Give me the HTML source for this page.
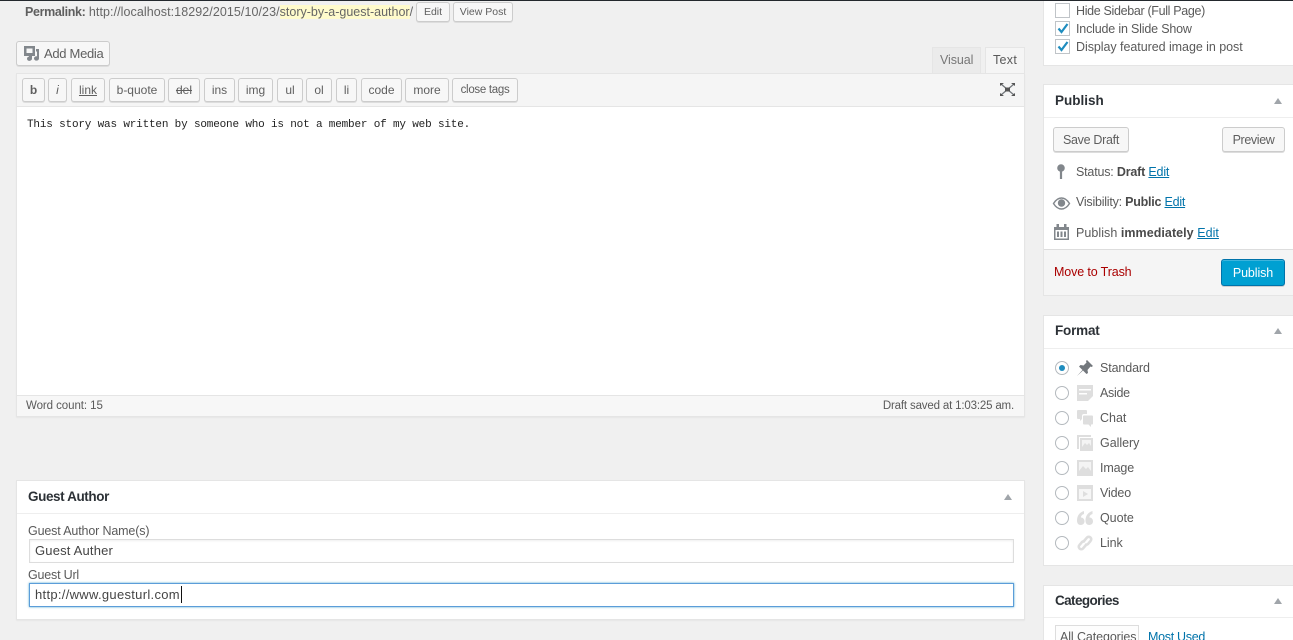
<!DOCTYPE html>
<html><head><meta charset="utf-8"><title>Edit Post</title>
<style>
html,body{margin:0;padding:0;width:1293px;height:640px;overflow:hidden;background:#f0f0f0}
body{position:relative;font-family:"Liberation Sans",sans-serif;font-size:13px;color:#444}
.a,.t,.b,.p{position:absolute;box-sizing:border-box}
.t{white-space:nowrap;line-height:18px;font-size:12.5px;color:#5a5a5a}
.b{background:#f7f7f7;border:1px solid #ccc;border-radius:3px;box-shadow:0 1px 0 #ddd;color:#5f5f5f;text-align:center;white-space:nowrap;font-size:12px;line-height:22px;height:24px}
.p{background:#fff;border:1px solid #e5e5e5;box-shadow:0 1px 1px rgba(0,0,0,.04)}
.h{font-weight:bold;font-size:13.5px;color:#2c3136}
.tri{position:absolute;width:0;height:0;border-left:4.5px solid transparent;border-right:4.5px solid transparent;border-bottom:6px solid #a0a5aa}
.line{position:absolute;height:1px;background:#eee}
.r{position:absolute;left:1055px;width:14px;height:14px;box-sizing:border-box;border:1px solid #b4b9be;border-radius:50%;background:#fff}
.c{position:absolute;left:1055px;width:15px;height:15px;box-sizing:border-box;border:1px solid #c0c4c8;background:#fff}
a{color:#0073aa;text-decoration:underline}
b{color:#4a4a4a}
svg{position:absolute;overflow:visible}
</style></head><body>

<div class="t" style="left:25px;top:3px;color:#666"><b style="color:#5f5f5f;letter-spacing:-.35px">Permalink:</b> <span style="letter-spacing:.07px">http://localhost:18292/2015/10/23/</span><span style="background:#fffbcc">story-by-a-guest-author</span>/</div>
<div class="b" style="left:416px;top:2px;width:34px;height:20px;line-height:18px;font-size:10.5px">Edit</div>
<div class="b" style="left:453px;top:2px;width:60px;height:20px;line-height:18px;font-size:10.5px">View Post</div>

<div class="b" style="left:16px;top:41px;width:94px;height:25px;line-height:23px;font-size:13px;letter-spacing:-.3px;text-align:left;padding-left:27px">Add Media</div>
<svg style="left:24px;top:46px" width="16" height="15" viewBox="0 0 16 15"><path fill="#82878c" fill-rule="evenodd" d="M0 0h11v10H0zM2.500 2.500v4.500h6V2.500z"/><path fill="#82878c" d="M12 3h3v9.500a2.500 2.200 0 1 1-2-2.200V5.500h-1zM5 9h3v3.500a2.500 2.200 0 1 1-3-2z"/></svg>

<div class="a" style="left:932px;top:47px;width:49px;height:27px;background:#ebebeb;border:1px solid #e5e5e5;border-bottom:0"></div>
<div class="t" style="left:940px;top:51px;color:#777;letter-spacing:-.08px">Visual</div>
<div class="a" style="left:985px;top:47px;width:40px;height:27px;background:#f5f5f5;border:1px solid #e5e5e5;border-bottom:0"></div>
<div class="t" style="left:993px;top:51px;letter-spacing:.3px">Text</div>

<div class="a" style="left:16px;top:73px;width:1009px;height:344px;background:#fff;border:1px solid #e5e5e5;box-shadow:0 1px 1px rgba(0,0,0,.04)"></div>
<div class="a" style="left:17px;top:74px;width:1007px;height:33px;background:#f5f5f5;border-bottom:1px solid #e5e5e5"></div>
<div class="b" style="left:22px;top:78px;width:23px;font-weight:bold">b</div>
<div class="b" style="left:48px;top:78px;width:19px;font-style:italic">i</div>
<div class="b" style="left:71px;top:78px;width:34px;text-decoration:underline">link</div>
<div class="b" style="left:109px;top:78px;width:56px">b-quote</div>
<div class="b" style="left:168px;top:78px;width:32px;text-decoration:line-through">del</div>
<div class="b" style="left:204px;top:78px;width:31px">ins</div>
<div class="b" style="left:238px;top:78px;width:35px">img</div>
<div class="b" style="left:277px;top:78px;width:26px">ul</div>
<div class="b" style="left:306px;top:78px;width:26px">ol</div>
<div class="b" style="left:336px;top:78px;width:21px">li</div>
<div class="b" style="left:361px;top:78px;width:41px">code</div>
<div class="b" style="left:405px;top:78px;width:44px">more</div>
<div class="b" style="left:452px;top:78px;width:66px;font-size:11.5px;line-height:23px;letter-spacing:-.3px">close tags</div>
<svg style="left:1000px;top:83px" width="15" height="13" viewBox="0 0 15 13"><path d="M1 1l13 11M14 1L1 12" stroke="#72777c" stroke-width="1.300"/><path fill="#555" d="M0 0h4L0 3zM15 0h-4l4 3zM0 13h4l-4-3zM15 13h-4l4-3zM5 4.500h5v4H5z"/></svg>

<div class="t" style="left:27px;top:116px;font-family:'Liberation Mono',monospace;font-size:11px;letter-spacing:-.18px;color:#222">This story was written by someone who is not a member of my web site.</div>

<div class="a" style="left:17px;top:395px;width:1007px;height:21px;background:#f7f7f7;border-top:1px solid #e5e5e5"></div>
<div class="t" style="left:26px;top:397px;font-size:11.5px;letter-spacing:-.07px">Word count: 15</div>
<div class="t" style="right:279px;top:397px;font-size:11.5px;letter-spacing:-.17px">Draft saved at 1:03:25 am.</div>

<div class="p" style="left:16px;top:480px;width:1009px;height:140px"></div>
<div class="line" style="left:17px;top:513px;width:1007px"></div>
<div class="t h" style="left:28px;top:488px;letter-spacing:-.4px">Guest Author</div>
<div class="tri" style="left:1004px;top:494px"></div>
<div class="t" style="left:28px;top:522px;letter-spacing:-.15px">Guest Author Name(s)</div>
<div class="a" style="left:29px;top:539px;width:985px;height:24px;background:#fff;border:1px solid #ddd;box-shadow:inset 0 1px 2px rgba(0,0,0,.07)"></div>
<div class="t" style="left:35px;top:542px;color:#444;font-size:13px;letter-spacing:.18px">Guest Auther</div>
<div class="t" style="left:28px;top:566px;letter-spacing:-.2px">Guest Url</div>
<div class="a" style="left:29px;top:583px;width:985px;height:24px;background:#fff;border:1px solid #5b9dd9;box-shadow:0 0 2px rgba(30,140,190,.8)"></div>
<div class="t" style="left:35px;top:586px;color:#444;font-size:13px;letter-spacing:.3px">http://www.guesturl.com</div>
<div class="a" style="left:181px;top:586px;width:1px;height:17px;background:#111"></div>

<div class="a" style="left:1043px;top:0;width:250px;height:66px;background:#fff;border:1px solid #e5e5e5;border-top:0;border-right:0"></div>
<div class="c" style="top:3px"></div>
<div class="t" style="left:1076px;top:2px;letter-spacing:-.33px">Hide Sidebar (Full Page)</div>
<div class="c" style="top:21px"></div>
<svg style="left:1057px;top:23px" width="12" height="11" viewBox="0 0 12 11"><path d="M1.500 5.500l3 3.500L10.500 1" fill="none" stroke="#1e8cbe" stroke-width="2.200"/></svg>
<div class="t" style="left:1076px;top:20px;letter-spacing:-.18px">Include in Slide Show</div>
<div class="c" style="top:39px"></div>
<svg style="left:1057px;top:41px" width="12" height="11" viewBox="0 0 12 11"><path d="M1.500 5.500l3 3.500L10.500 1" fill="none" stroke="#1e8cbe" stroke-width="2.200"/></svg>
<div class="t" style="left:1076px;top:38px;letter-spacing:-.05px">Display featured image in post</div>

<div class="a" style="left:1043px;top:84px;width:250px;height:212px;background:#fff;border:1px solid #e5e5e5;border-right:0"></div>
<div class="line" style="left:1044px;top:117px;width:249px"></div>
<div class="t h" style="left:1055px;top:92px">Publish</div>
<div class="tri" style="left:1274px;top:98px"></div>
<div class="b" style="left:1053px;top:127px;width:76px;height:25px;line-height:24px;font-size:12.5px;letter-spacing:-.3px">Save Draft</div>
<div class="b" style="left:1222px;top:127px;width:63px;height:25px;line-height:24px;font-size:12.5px;letter-spacing:-.37px">Preview</div>
<svg style="left:1056px;top:164px" width="10" height="16" viewBox="0 0 10 16"><circle cx="5" cy="4" r="3.800" fill="#82878c"/><path d="M5 6v9" stroke="#82878c" stroke-width="2.200"/></svg>
<div class="t" style="left:1076px;top:163px;letter-spacing:-.19px">Status: <b>Draft</b> <a>Edit</a></div>
<svg style="left:1053px;top:197px" width="17" height="13" viewBox="0 0 17 13"><path d="M.5 6.500C3 2.500 6 1 8.500 1s5.500 1.500 8 5.500C14 10.500 11 12 8.500 12s-5.500-1.500-8-5.500z" fill="none" stroke="#82878c" stroke-width="1.400"/><circle cx="8.500" cy="6" r="3.700" fill="#82878c"/></svg>
<div class="t" style="left:1076px;top:193px;letter-spacing:-.23px">Visibility: <b>Public</b> <a>Edit</a></div>
<svg style="left:1054px;top:224px" width="15" height="16" viewBox="0 0 15 16"><path fill="#82878c" d="M0 3h2.500V0H5v3h5V0h2.500v3H15v13H0zM1.500 6v8.500h12V6z"/><path fill="#82878c" d="M3 7.500h2V13H3zM6.500 7.500h2V13h-2zM10 7.500h2V13h-2z"/></svg>
<div class="t" style="left:1076px;top:224px;letter-spacing:.05px">Publish <b>immediately</b> <a>Edit</a></div>
<div class="a" style="left:1044px;top:249px;width:249px;height:46px;background:#f5f5f5;border-top:1px solid #ddd"></div>
<div class="t" style="left:1054px;top:263px;color:#a00;letter-spacing:-.13px">Move to Trash</div>
<div class="b" style="left:1221px;top:259px;width:64px;height:27px;line-height:26px;font-size:12.5px;letter-spacing:-.1px;background:#00a0d2;border-color:#0073aa;color:#fff;box-shadow:inset 0 1px 0 rgba(120,200,230,.5),0 1px 0 rgba(0,0,0,.15)">Publish</div>

<div class="a" style="left:1043px;top:315px;width:250px;height:251px;background:#fff;border:1px solid #e5e5e5;border-right:0"></div>
<div class="line" style="left:1044px;top:348px;width:249px"></div>
<div class="t h" style="left:1055px;top:322px;letter-spacing:-.2px">Format</div>
<div class="tri" style="left:1274px;top:328px"></div>

<div class="r" style="top:361px"></div><div class="a" style="left:1059px;top:365px;width:6px;height:6px;border-radius:50%;background:#1e8cbe"></div>
<svg style="left:1077px;top:360px" width="16" height="16" viewBox="0 0 16 16"><path fill="#72777c" d="M10 0l6 6-1.500 1-1-.5L10.500 10l.5 3-1.500 1L6 10.500 0 16l5.500-6L2 6.500 3.500 5l3 .5L9.500 2.500 9 1z"/></svg>
<div class="t" style="left:1100px;top:359px;letter-spacing:-.12px">Standard</div>

<div class="r" style="top:386px"></div>
<svg style="left:1077px;top:385px" width="16" height="16" viewBox="0 0 16 16"><path fill="#dedede" d="M0 0h16v11l-5 5H0z"/><path fill="#fff" d="M2 4h12v1.500H2zM2 8h8v1.500H2z"/></svg>
<div class="t" style="left:1100px;top:384px;letter-spacing:-.3px">Aside</div>

<div class="r" style="top:411px"></div>
<svg style="left:1077px;top:410px" width="16" height="17" viewBox="0 0 16 17"><path fill="#dedede" d="M1 0h8a1 1 0 0 1 1 1v3H7a2 2 0 0 0-2 2v3L3 11V9H1a1 1 0 0 1-1-1V1a1 1 0 0 1 1-1zM7 5.500h8a1 1 0 0 1 1 1v7a1 1 0 0 1-1 1h-1v2.500L11.500 14.500H7a1 1 0 0 1-1-1v-7a1 1 0 0 1 1-1z"/></svg>
<div class="t" style="left:1100px;top:409px">Chat</div>

<div class="r" style="top:436px"></div>
<svg style="left:1077px;top:435px" width="16" height="16" viewBox="0 0 16 16"><path fill="#dedede" d="M0 0h14v2H2v12H0zM3 3h13v13H3z"/><path fill="#f4f4f4" d="M5 5h9v9H5z"/><path fill="#dedede" d="M5 12l3-4 2 2 2-2 2 3v3H5z"/></svg>
<div class="t" style="left:1100px;top:434px;letter-spacing:-.03px">Gallery</div>

<div class="r" style="top:461px"></div>
<svg style="left:1077px;top:460px" width="16" height="16" viewBox="0 0 16 16"><path fill="#dedede" d="M0 0h16v16H0z"/><path fill="#f4f4f4" d="M2 2h12v12H2z"/><path fill="#dedede" d="M2 11l4-5 3 3 2-2 3 4v3H2z"/></svg>
<div class="t" style="left:1100px;top:459px;letter-spacing:-.15px">Image</div>

<div class="r" style="top:486px"></div>
<svg style="left:1077px;top:485px" width="16" height="16" viewBox="0 0 16 16"><path fill="#dedede" d="M0 0h16v16H0z"/><path fill="#f6f6f6" d="M2 4h12v10H2z"/><path fill="#dedede" d="M6 6l5 3-5 3z"/></svg>
<div class="t" style="left:1100px;top:484px;letter-spacing:-.15px">Video</div>

<div class="r" style="top:511px"></div>
<svg style="left:1077px;top:510px" width="16" height="16" viewBox="0 0 16 16"><path fill="#dedede" d="M7 1C3 2 0 5.500 0 10.500 0 13.500 1.500 15 3.800 15S7.500 13.500 7.500 11.300 6 7.500 4 7.500C4 5.500 5.500 4.500 7 4zM15.500 1c-4 1-7 4.500-7 9.500 0 3 1.500 4.500 3.800 4.500s3.700-1.500 3.700-3.700-1.500-3.800-3.500-3.800c0-2 1.500-3 3-3.500z"/></svg>
<div class="t" style="left:1100px;top:509px;letter-spacing:-.05px">Quote</div>

<div class="r" style="top:536px"></div>
<svg style="left:1077px;top:535px" width="16" height="16" viewBox="0 0 16 16"><path fill="none" stroke="#dedede" stroke-width="2.600" d="M7 6l3-3.500a2.400 2.400 0 0 1 3.500 3.500L11 9a2.400 2.400 0 0 1-3 0M9 10l-3 3.500A2.400 2.400 0 0 1 2.500 10L5 7a2.400 2.400 0 0 1 3 0"/></svg>
<div class="t" style="left:1100px;top:534px;letter-spacing:-.05px">Link</div>

<div class="a" style="left:1043px;top:585px;width:250px;height:60px;background:#fff;border:1px solid #e5e5e5;border-right:0"></div>
<div class="line" style="left:1044px;top:617px;width:249px"></div>
<div class="t h" style="left:1055px;top:592px;letter-spacing:-.6px">Categories</div>
<div class="tri" style="left:1274px;top:598px"></div>
<div class="a" style="left:1055px;top:625px;width:84px;height:20px;border:1px solid #ddd;background:#fdfdfd"></div>
<div class="t" style="left:1060px;top:628px;letter-spacing:-.1px">All Categories</div>
<div class="t" style="left:1148px;top:628px;letter-spacing:-.3px"><span style="color:#0073aa">Most Used</span></div>

<div class="a" style="left:0;top:0;width:1293px;height:1px;background:#23282d"></div>
</body></html>
